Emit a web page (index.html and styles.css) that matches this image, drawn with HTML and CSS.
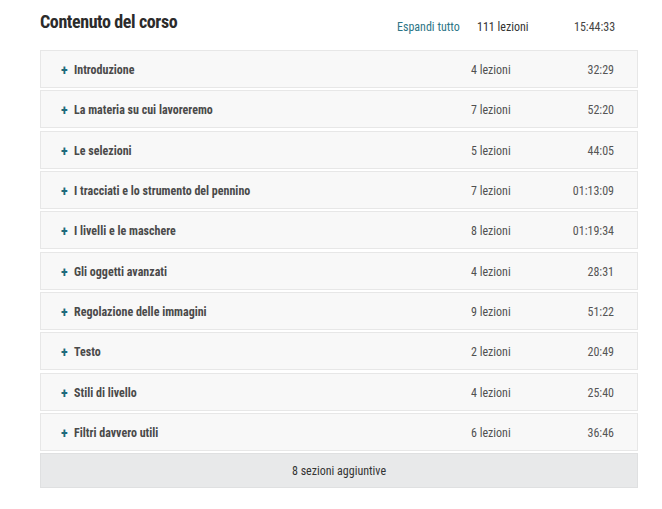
FILE: index.html
```html
<!doctype html>
<html lang="it">
<head>
  <meta charset="utf-8">
  <meta name="viewport" content="width=device-width,initial-scale=1">
  <title>Contenuto del corso</title>
  <link rel="stylesheet" href="styles.css">
</head>
<body>
  <div class="course-content">
    <div class="cc-header">
      <h2 class="cc-title">Contenuto del corso</h2>
      <a class="cc-expand" href="#">Espandi tutto</a>
      <span class="cc-count">111 lezioni</span>
      <span class="cc-time">15:44:33</span>
    </div>

    <div class="cc-list">
      <div class="cc-row"><span class="cc-plus">+</span><span class="cc-name">Introduzione</span><span class="cc-lessons">4 lezioni</span><span class="cc-dur">32:29</span></div>
      <div class="cc-row"><span class="cc-plus">+</span><span class="cc-name">La materia su cui lavoreremo</span><span class="cc-lessons">7 lezioni</span><span class="cc-dur">52:20</span></div>
      <div class="cc-row"><span class="cc-plus">+</span><span class="cc-name">Le selezioni</span><span class="cc-lessons">5 lezioni</span><span class="cc-dur">44:05</span></div>
      <div class="cc-row"><span class="cc-plus">+</span><span class="cc-name">I tracciati e lo strumento del pennino</span><span class="cc-lessons">7 lezioni</span><span class="cc-dur">01:13:09</span></div>
      <div class="cc-row"><span class="cc-plus">+</span><span class="cc-name">I livelli e le maschere</span><span class="cc-lessons">8 lezioni</span><span class="cc-dur">01:19:34</span></div>
      <div class="cc-row"><span class="cc-plus">+</span><span class="cc-name">Gli oggetti avanzati</span><span class="cc-lessons">4 lezioni</span><span class="cc-dur">28:31</span></div>
      <div class="cc-row"><span class="cc-plus">+</span><span class="cc-name">Regolazione delle immagini</span><span class="cc-lessons">9 lezioni</span><span class="cc-dur">51:22</span></div>
      <div class="cc-row"><span class="cc-plus">+</span><span class="cc-name">Testo</span><span class="cc-lessons">2 lezioni</span><span class="cc-dur">20:49</span></div>
      <div class="cc-row"><span class="cc-plus">+</span><span class="cc-name">Stili di livello</span><span class="cc-lessons">4 lezioni</span><span class="cc-dur">25:40</span></div>
      <div class="cc-row"><span class="cc-plus">+</span><span class="cc-name">Filtri davvero utili</span><span class="cc-lessons">6 lezioni</span><span class="cc-dur">36:46</span></div>
    </div>

    <button class="cc-more">8 sezioni aggiuntive</button>
  </div>
</body>
</html>
```

FILE: styles.css
```css
*{box-sizing:border-box;}
body{ margin:0; background:#fff; color:#333; font-family:"Roboto Condensed","Liberation Sans Narrow","DejaVu Sans Condensed",Roboto,sans-serif; font-stretch:condensed; }
.course-content{ width:598px; margin:0 0 0 40px; padding-top:8px; }
.cc-header{ display:flex; align-items:center; height:28px; margin-bottom:14px; font-size:12px; }
.cc-title{ margin:0; font-size:18px; line-height:28px; font-weight:700; color:#2b2b2b; flex:1; letter-spacing:-0.4px; }
.cc-expand, .cc-count, .cc-time{ margin-top:9px; }
.cc-expand{ color:#2c7586; text-decoration:none; width:80px; }
.cc-count{ width:97px; }
.cc-time{ width:40px; text-align:right; margin-right:24px; color:#444; }
.cc-list{ display:flex; flex-direction:column; gap:2.33px; }
.cc-row{ display:flex; align-items:center; height:38px; padding:2px 23px 0 20px; background:#f8f8f8; border:1px solid #e7e7e7; font-size:12px; }
.cc-plus{ width:13px; color:#1f6a7b; font-weight:700; font-size:14px; }
.cc-name{ flex:1; font-weight:700; color:#4a4a4a; }
.cc-lessons{ width:80px; color:#505050; }
.cc-dur{ width:63px; text-align:right; color:#555; }
.cc-more{ display:block; width:100%; height:35px; margin-top:2px; padding-top:2px; background:#e8e9ea; border:1px solid #dfe0e1; font:inherit; font-size:12px; color:#333; }
```
